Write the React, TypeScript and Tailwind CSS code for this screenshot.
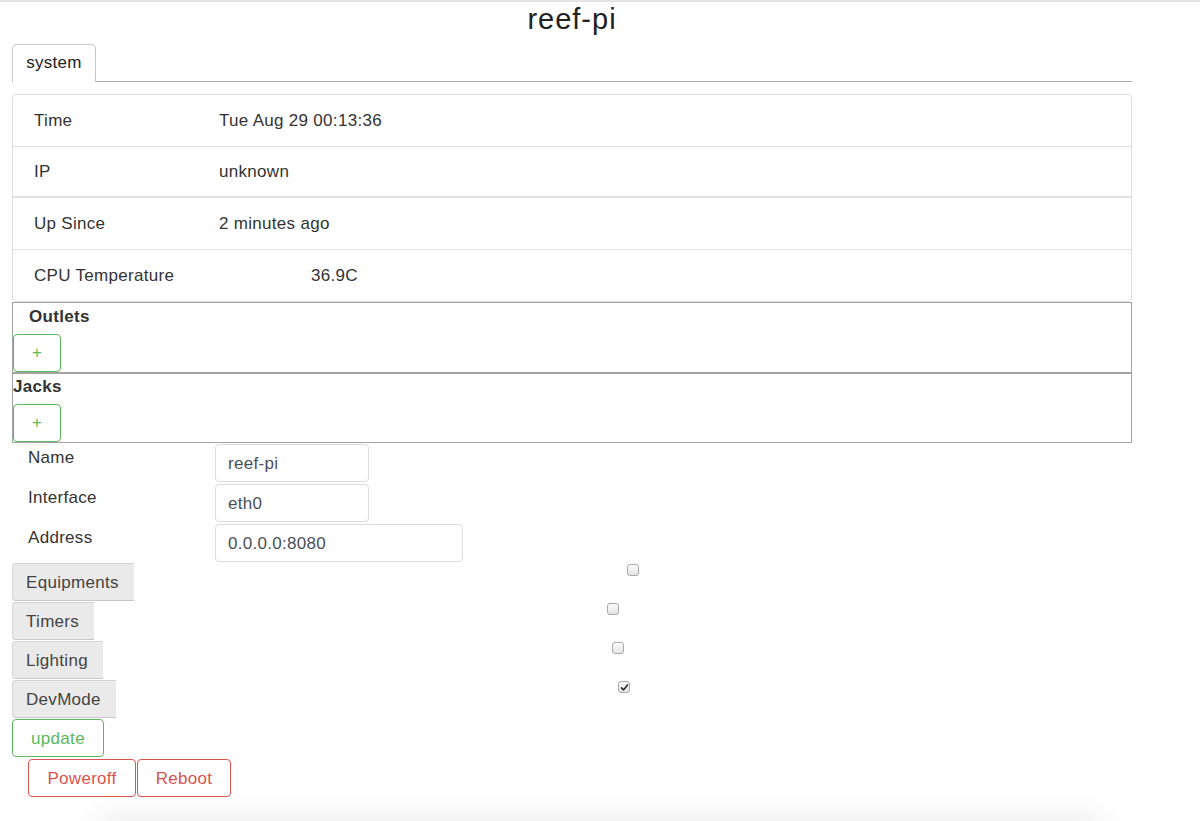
import React from "react";

const font = { fontFamily: '"Liberation Sans", Arial, sans-serif' };

const info = [
  { label: "Time", value: "Tue Aug 29 00:13:36", pad: "", row: "h-[52px] border-b border-[#e2e2e2]" },
  { label: "IP", value: "unknown", pad: "", row: "h-[51px] border-b-2 border-[#e2e2e2]" },
  { label: "Up Since", value: "2 minutes ago", pad: "", row: "h-[52px] border-b border-[#e2e2e2]" },
  { label: "CPU Temperature", value: "36.9C", pad: "pl-[92px]", row: "h-[51px]" },
];

const fields = [
  { label: "Name", value: "reef-pi", w: "w-[154px]" },
  { label: "Interface", value: "eth0", w: "w-[154px]" },
  { label: "Address", value: "0.0.0.0:8080", w: "w-[248px]" },
];

const toggles = [
  { label: "Equipments", w: "w-[122px]", on: false },
  { label: "Timers", w: "w-[82px]", on: false },
  { label: "Lighting", w: "w-[91px]", on: false },
  { label: "DevMode", w: "w-[104px]", on: true },
];

function Check({ on }: { on: boolean }) {
  return (
    <span className="mt-[1px] flex h-[12px] w-[12px] items-center justify-center rounded-[3px] border border-[#a9a9a9] bg-gradient-to-b from-[#fcfcfc] to-[#e4e4e4]">
      {on && (
        <svg viewBox="0 0 12 12" className="h-[9px] w-[9px]">
          <path d="M2 6.5 L4.8 9.2 L10 2.6" fill="none" stroke="#222" strokeWidth="2" strokeLinecap="round" strokeLinejoin="round" />
        </svg>
      )}
    </span>
  );
}

function Panel({ title, head }: { title: string; head: string }) {
  return (
    <div className="border border-[#a3a3a3]">
      <div className={`text-[17px] font-semibold leading-[26px] text-[#333] ${head}`}>{title}</div>
      <button className="flex h-[38px] w-[48px] items-center justify-center rounded-[4px] border border-[#5cb85c] text-[17px] text-[#5cb85c]">
        +
      </button>
    </div>
  );
}

export default function App() {
  return (
    <div className="min-h-[821px] w-[1200px] border-t-2 border-[#e4e4e4] bg-white text-[17px] tracking-[0.3px] text-[#333]" style={font}>
      <div className="ml-[12px] w-[1120px]">
        <h1 className="h-[42px] pt-[3px] text-center text-[29px] leading-[28px] tracking-[1px] text-[#222]">reef-pi</h1>

        <div className="flex border-b border-[#a8a8a8]">
          <div className="mb-[-1px] flex h-[38px] w-[84px] items-center justify-center rounded-t-[5px] border border-b-0 border-[#c8c8c8] bg-white pb-[1px] text-[#222]">
            system
          </div>
        </div>

        <div className="mt-[12px] rounded-[4px] border border-[#dedede]">
          {info.map((r) => (
            <div key={r.label} className={`flex items-center px-[21px] ${r.row}`}>
              <span className="w-[185px]">{r.label}</span>
              <span className={r.pad}>{r.value}</span>
            </div>
          ))}
        </div>

        <Panel title="Outlets" head="h-[31px] pl-[16px] pt-[1px]" />
        <Panel title="Jacks" head="h-[30px]" />

        <div className="pt-[1px]">
          {fields.map((f) => (
            <div key={f.label} className="flex h-[40px]">
              <span className="w-[203px] pl-[16px] pt-[2px] leading-[24px]">{f.label}</span>
              <div className={`flex h-[38px] items-center rounded-[4px] border border-[#dcdcdc] px-[12px] pt-[2px] text-[#495057] ${f.w}`}>
                {f.value}
              </div>
            </div>
          ))}
        </div>

        <div className="mt-[-1px]">
          {toggles.map((t) => (
            <div key={t.label} className="mb-[1px] flex h-[38px]">
              <div className={`flex items-center rounded-l-[4px] border border-r-0 border-[#d4d4d4] border-b-[#c9c9c9] bg-[#eaeaea] px-[13px] pt-[2px] text-[#444] ${t.w}`}>
                {t.label}
              </div>
              <div className="flex flex-1 justify-center">
                <Check on={t.on} />
              </div>
            </div>
          ))}
        </div>

        <button className="flex h-[38px] w-[92px] items-center justify-center rounded-[4px] border border-[#5cb85c] pt-[2px] text-[#5cb85c]">
          update
        </button>

        <div className="mt-[2px] flex gap-[1px] pl-[16px]">
          <button className="flex h-[38px] w-[108px] items-center justify-center rounded-[4px] border border-[#d9534f] pt-[1px] text-[#d9534f]">
            Poweroff
          </button>
          <button className="flex h-[38px] w-[94px] items-center justify-center rounded-[4px] border border-[#d9534f] pt-[1px] text-[#d9534f]">
            Reboot
          </button>
        </div>
      </div>

      <div className="mx-[110px] mt-[30px] h-[40px] bg-white shadow-[0_0_30px_12px_rgba(0,0,0,0.07)]" />
    </div>
  );
}
